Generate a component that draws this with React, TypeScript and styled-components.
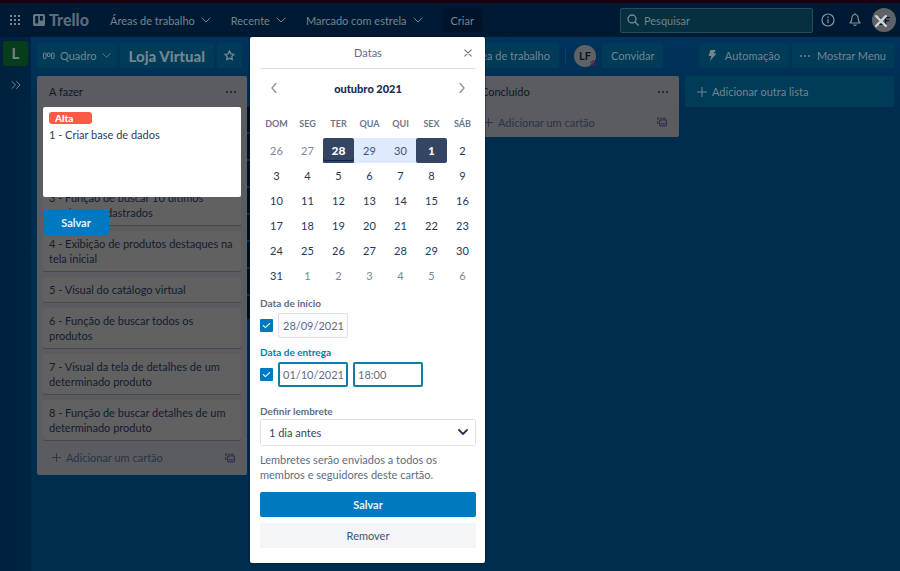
import React from "react";
import styled, { createGlobalStyle, css } from "styled-components";

const font = `Lato, "Open Sans", sans-serif`;

const Global = createGlobalStyle`
  *, *::before, *::after { box-sizing: border-box; }
  html, body, #root { height: 100%; }
  body { margin: 0; background: #002c4d; overflow: hidden; }
  body, button, input, select { font-family: ${font}; font-size: 11px; line-height: 15px; }
  button { border: 0; padding: 0; margin: 0; background: none; color: inherit; cursor: pointer; }
  svg { display: block; flex: none; }
  h1, h2, h3, p, ul, ol { margin: 0; padding: 0; font-size: 11px; font-weight: 400; }
  ul { list-style: none; }
`;

const Page = styled.div`
  position: relative;
  display: flex;
  flex-direction: column;
  min-height: 100%;
  color: #748590;
`;

const TopBar = styled.header`
  display: flex;
  align-items: center;
  height: 37px;
  padding: 0 4px 0 10px;
  background: #001a33;
  border-top: 3px solid #1c0014;
`;

const Logo = styled.a`
  display: flex;
  align-items: center;
  gap: 4px;
  margin-left: 12px;
  width: 77px;
  font: 900 16px/20px Lato, sans-serif;
  color: #5e6b78;
  text-decoration: none;
`;

const Nav = styled.nav`
  display: flex;
  align-items: center;
  gap: 20px;
  flex: 1;
`;

const NavButton = styled.button`
  display: flex;
  align-items: center;
  gap: 6px;
  white-space: nowrap;
`;

const CreateButton = styled.button`
  height: 24px;
  padding: 0 8px;
  border-radius: 2px;
  background: #00132a;
  color: #76858f;
`;

const Search = styled.label`
  display: flex;
  align-items: center;
  gap: 5px;
  width: 193px;
  height: 25px;
  padding: 0 6px;
  border: 1px solid #20505c;
  border-radius: 2px;
  background: #062f3f;
  input {
    flex: 1;
    min-width: 0;
    padding: 0;
    border: 0;
    outline: 0;
    background: none;
    color: #71858d;
  }
  input::placeholder { color: #71858d; opacity: 1; }
`;

const IconButton = styled.button<{ $size?: number }>`
  display: grid;
  place-items: center;
  width: ${(p) => p.$size ?? 16}px;
  height: ${(p) => p.$size ?? 16}px;
`;

const TopActions = styled.div`
  display: flex;
  align-items: center;
  gap: 7px;
  margin-left: 5px;
`;

const Avatar = styled.span<{ $size: number }>`
  position: relative;
  display: grid;
  place-items: center;
  flex: none;
  width: ${(p) => p.$size}px;
  height: ${(p) => p.$size}px;
  border-radius: 50%;
  background: #5f6266;
  color: #0b1426;
  font-size: 11px;
  font-weight: 700;
`;

const AvatarBadge = styled.span`
  position: absolute;
  right: 0;
  bottom: 1px;
`;

const CloseOverlay = styled.button`
  position: absolute;
  top: 7px;
  left: 3px;
  color: #cdd1d4;
`;

const Body = styled.div`
  display: flex;
  flex: 1;
`;

const Sidebar = styled.aside`
  display: flex;
  flex-direction: column;
  align-items: center;
  gap: 11px;
  width: 31px;
  padding-top: 4px;
  background: linear-gradient(90deg, #00213d, #002443);
`;

const Workspace = styled.a`
  display: grid;
  place-items: center;
  width: 25px;
  height: 25px;
  border-radius: 3px;
  background: #063d1b;
  color: #78828a;
  font-size: 15px;
  font-weight: 700;
  text-decoration: none;
`;

const Board = styled.main`
  flex: 1;
  min-width: 0;
  background: linear-gradient(#00345c 0, #002c4d 80px);
`;

const BoardBar = styled.div`
  display: flex;
  align-items: center;
  gap: 6px;
  height: 37px;
  padding: 0 6px;
`;

const BarLeft = styled.div`
  display: flex;
  gap: 3px;
  width: 522px;
`;

const BarRight = styled.div`
  display: flex;
  gap: 3px;
  margin-left: auto;
`;

const BarButton = styled.button<{ $pad?: number; $gap?: number; $push?: boolean }>`
  display: flex;
  align-items: center;
  justify-content: center;
  gap: ${(p) => p.$gap ?? 4}px;
  height: 25px;
  padding: 0 ${(p) => p.$pad ?? 9}px;
  border-radius: 2px;
  background: #003b58;
  white-space: nowrap;
  ${(p) => p.$push && css`margin-left: auto;`}
`;

const BoardTitle = styled.h1`
  font-size: 15px;
  line-height: 20px;
  font-weight: 900;
`;

const Divider = styled.span`
  width: 1px;
  height: 14px;
  margin-right: 2px;
  background: #11425f;
`;

const Lists = styled.div`
  display: flex;
  align-items: flex-start;
  gap: 6px;
  padding: 2px 6px;
`;

const List = styled.section`
  display: flex;
  flex-direction: column;
  width: 210px;
  padding: 0 6px;
  border-radius: 2px;
  background: #5b5c5f;
  color: #111c30;
`;

const ListHead = styled.div`
  display: flex;
  align-items: center;
  justify-content: space-between;
  height: 31px;
  padding: 0 2px 0 6px;
`;

const ListTitle = styled.h2`
  color: #0c1629;
`;

const Cards = styled.ul`
  display: flex;
  flex-direction: column;
  gap: 6px;
`;

const Card = styled.li`
  padding: 5px 6px;
  border-radius: 2px;
  background: #616161;
  box-shadow: 0 1px 0 #48494d;
`;

const EditedCard = styled.li`
  position: relative;
  height: 72px;
`;

const QuickEditor = styled.div`
  position: absolute;
  inset: 0 0 auto;
  z-index: 1;
  display: flex;
  flex-direction: column;
  align-items: flex-start;
  gap: 12px;
`;

const EditorBox = styled.div`
  width: 100%;
  height: 90px;
  padding: 5px 6px;
  border-radius: 2px;
  background: #fff;
  color: #2c3b57;
`;

const Label = styled.span`
  display: block;
  width: 43px;
  height: 12px;
  margin-bottom: 3px;
  padding-left: 6px;
  border-radius: 3px;
  background: #fb5a47;
  color: #fff;
  font-size: 10px;
  line-height: 12px;
  font-weight: 900;
`;

const QuickMenu = styled.div`
  position: absolute;
  top: 0;
  left: 204px;
  width: 9px;
  height: 212px;
  background: repeating-linear-gradient(#00101f 0 25px, #003358 25px 27px);
`;

const PrimaryButton = styled.button<{ $wide?: boolean }>`
  width: ${(p) => (p.$wide ? "100%" : "66px")};
  height: ${(p) => (p.$wide ? 25 : 26)}px;
  border-radius: 2px;
  background: #0079bf;
  color: #e4f5fc;
  font-weight: 700;
`;

const AddCard = styled.div`
  display: flex;
  align-items: center;
  justify-content: space-between;
  height: 35px;
  padding: 0 4px 0 9px;
  color: #28344a;
`;

const AddCardButton = styled.button`
  display: flex;
  align-items: center;
  gap: 5px;
`;

const SideLists = styled.div`
  display: contents;
  ${AddCard} { height: 30px; }
`;

const AddList = styled.button`
  display: flex;
  align-items: center;
  gap: 5px;
  flex: 1;
  height: 31px;
  padding: 0 12px;
  border-radius: 2px;
  background: #003b58;
`;

const Dialog = styled.section`
  position: absolute;
  top: 37px;
  left: 250px;
  z-index: 2;
  width: 235px;
  padding: 0 9px 15px 10px;
  border-radius: 2px;
  background: #fff;
  color: #5e6c84;
  box-shadow: 0 0 2px #001022;
`;

const DialogHead = styled.header`
  display: grid;
  grid-template-columns: 16px 1fr 16px;
  align-items: center;
  height: 32px;
  border-bottom: 1px solid #dfe1e6;
  text-align: center;
`;

const MonthBar = styled.div`
  display: flex;
  align-items: center;
  justify-content: space-between;
  height: 38px;
  padding: 0 6px;
  color: #8993a4;
`;

const MonthName = styled.h3`
  color: #172b4d;
  font-weight: 900;
`;

const Calendar = styled.table`
  width: 217px;
  margin: 5px 0 0 1px;
  border-collapse: collapse;
  table-layout: fixed;
  text-align: center;
`;

const WeekDay = styled.th`
  height: 26px;
  padding: 0 0 2px;
  color: #6b778c;
  font-size: 9px;
  line-height: 12px;
  font-weight: 700;
`;

type DayKind = "in" | "out" | "edge" | "today" | "range";

const Day = styled.td<{ $kind: DayKind }>`
  height: 25px;
  padding: 0;
  button {
    width: 100%;
    height: 25px;
    border-radius: 2px;
    color: #253858;
    ${(p) => p.$kind === "out" && css`color: #7a869a;`}
    ${(p) => p.$kind === "range" && css`background: #deebff; border-radius: 0; color: #42526e;`}
    ${(p) => (p.$kind === "edge" || p.$kind === "today") && css`background: #344563; color: #fff; font-weight: 900;`}
    ${(p) => p.$kind === "today" && css`box-shadow: inset 0 -2px 0 #344563, inset 0 -3px 0 #0c2350; font-size: 12px;`}
  }
`;

const Field = styled.div<{ $top: number }>`
  margin-top: ${(p) => p.$top}px;
`;

const FieldLabel = styled.label<{ $active?: boolean; $tight?: boolean }>`
  display: block;
  margin-bottom: ${(p) => (p.$tight ? 0 : 2)}px;
  font-size: 10px;
  line-height: 15px;
  font-weight: 700;
  color: ${(p) => (p.$active ? "#007fa5" : "#5e6c84")};
`;

const FieldRow = styled.div`
  display: flex;
  align-items: center;
  gap: 5px;
`;

const Check = styled.span`
  position: relative;
  width: 13px;
  height: 13px;
  color: #d8f4ff;
  input {
    appearance: none;
    display: block;
    width: 13px;
    height: 13px;
    margin: 0;
    border-radius: 1px;
    background: #0079bf;
  }
  svg {
    position: absolute;
    inset: 2px;
    pointer-events: none;
  }
`;

const DateInput = styled.input<{ $active?: boolean }>`
  width: 70px;
  height: 25px;
  padding: 0 0 0 ${(p) => (p.$active ? 3 : 4)}px;
  border: ${(p) => (p.$active ? "2px solid #0f7ea6" : "1px solid #dfe1e6")};
  border-radius: 2px;
  outline: 0;
  background: ${(p) => (p.$active ? "#fff" : "#fafbfc")};
  color: #5e6c84;
`;

const SelectBox = styled.div`
  position: relative;
  color: #253858;
  select {
    appearance: none;
    display: block;
    width: 100%;
    height: 27px;
    padding: 0 8px;
    border: 1px solid #dfe1e6;
    border-radius: 2px;
    background: #fff;
    color: #344563;
  }
  svg {
    position: absolute;
    top: 8px;
    right: 8px;
    pointer-events: none;
  }
`;

const Hint = styled.p`
  margin: 6px 0 10px;
`;

const RemoveButton = styled.button`
  width: 100%;
  height: 25px;
  margin-top: 6px;
  border-radius: 2px;
  background: #f4f5f7;
  color: #42526e;
`;

type StrokeProps = { d: string; size?: number; width?: number };
const Stroke = ({ d, size = 10, width = 1 }: StrokeProps) => (
  <svg width={size} height={size} viewBox="0 0 10 10" fill="none" stroke="currentColor" strokeWidth={width} strokeLinecap="round" strokeLinejoin="round">
    <path d={d} />
  </svg>
);

const down = "M1 3l4 4 4-4";
const plus = "M5 .5v9M.5 5h9";
const cross = "M1 1l8 8M9 1L1 9";

const Dots = () => (
  <svg width="10" height="4" viewBox="0 0 10 4" fill="currentColor">
    <circle cx="1" cy="2" r="1" /><circle cx="5" cy="2" r="1" /><circle cx="9" cy="2" r="1" />
  </svg>
);

const AppsIcon = () => (
  <svg width="11" height="11" viewBox="0 0 11 11" fill="#7b8790">
    {[0, 4, 8].map((y) => [0, 4, 8].map((x) => <rect key={`${x}-${y}`} x={x} y={y} width="2" height="2" />))}
  </svg>
);

const TrelloMark = () => (
  <svg width="12" height="12" viewBox="0 0 12 12">
    <path fillRule="evenodd" fill="#697782" d="M1.500 0h9A1.500 1.500 0 0 1 12 1.500v9a1.500 1.500 0 0 1-1.500 1.500h-9A1.500 1.500 0 0 1 0 10.500v-9A1.500 1.500 0 0 1 1.500 0zM2.200 2v7.500h3V2zM6.900 2v4.500h3V2z" />
  </svg>
);

const BoardIcon = () => (
  <svg width="12" height="8" viewBox="0 0 12 8" fill="none" stroke="currentColor">
    <rect x=".5" y="1" width="2.500" height="5.500" rx=".6" /><rect x="4.500" y="1" width="2.500" height="3.500" rx=".6" /><rect x="8.500" y="1" width="2.500" height="5.500" rx=".6" />
  </svg>
);

const StarIcon = () => (
  <svg width="11" height="11" viewBox="0 0 12 12" fill="none" stroke="currentColor" strokeWidth="1.500" strokeLinejoin="round">
    <path d="M6 1l1.500 3.200 3.500.5-2.500 2.400.6 3.500L6 8.900l-3.100 1.700.6-3.500L1 4.700l3.500-.5z" />
  </svg>
);

const SearchIcon = () => (
  <svg width="12" height="12" viewBox="0 0 12 12" fill="none" stroke="currentColor" strokeWidth="1.400" strokeLinecap="round">
    <circle cx="5" cy="5" r="4" /><path d="M8 8l3.300 3.300" />
  </svg>
);

const InfoIcon = () => (
  <svg width="14" height="14" viewBox="0 0 14 14" fill="none" stroke="#8593a0" strokeWidth="1.200">
    <circle cx="7" cy="7" r="6" /><path d="M7 6v4.200M7 3.600V5" />
  </svg>
);

const BellIcon = () => (
  <svg width="12" height="14" viewBox="0 0 12 14" fill="none" stroke="#8593a0" strokeWidth="1.200" strokeLinejoin="round">
    <path d="M6 1.500a3 3 0 0 0-3 3c0 3-.6 4.200-2 5.500h10C9.600 8.700 9 7.500 9 4.500a3 3 0 0 0-3-3zM4.700 11.500a1.400 1.400 0 0 0 2.600 0M6 .3v1.200" />
  </svg>
);

const BoltIcon = () => (
  <svg width="9" height="11" viewBox="0 0 9 11" fill="currentColor">
    <path d="M2.500 0h5L6 3.500h2.500L2 11l1.300-5H.5z" />
  </svg>
);

const TemplateIcon = () => (
  <svg width="10" height="10" viewBox="0 0 10 10" fill="none" stroke="currentColor" strokeWidth="1.200">
    <rect x="2.600" y="2.800" width="6.800" height="6" rx="1" /><path d="M.7 7V4.500M.7 3V1.200h1.500M3.200 1.200h1.800M6 1.200h2.300M4 6.700h4.500" />
  </svg>
);

const BadgeIcon = () => (
  <svg width="6" height="6" viewBox="0 0 6 6" fill="none" stroke="#4a2a48" strokeWidth="1.200">
    <path d="M.5 3L3 .8 5.500 3M.5 5.500L3 3.300l2.500 2.200" />
  </svg>
);

const AddCardRow = () => (
  <AddCard>
    <AddCardButton><Stroke d={plus} size={9} />Adicionar um cartão</AddCardButton>
    <IconButton $size={14} aria-label="Criar a partir de modelo"><TemplateIcon /></IconButton>
  </AddCard>
);

const cards = [
  "3 - Função de buscar 10 últimos produtos cadastrados",
  "4 - Exibição de produtos destaques na tela inicial",
  "5 - Visual do catálogo virtual",
  "6 - Função de buscar todos os produtos",
  "7 - Visual da tela de detalhes de um determinado produto",
  "8 - Função de buscar detalhes de um determinado produto",
];

const weekDays = ["DOM", "SEG", "TER", "QUA", "QUI", "SEX", "SÁB"];
const firstDay = Date.UTC(2021, 8, 26);
const weeks = [0, 1, 2, 3, 4, 5].map((w) =>
  [0, 1, 2, 3, 4, 5, 6].map((d) => {
    const i = w * 7 + d;
    const date = new Date(firstDay + i * 86400000);
    const kind: DayKind =
      i === 2 ? "today" : i === 5 ? "edge" : i === 3 || i === 4 ? "range" : date.getUTCMonth() === 9 ? "in" : "out";
    return { i, day: date.getUTCDate(), kind };
  })
);

const Tick = ({ id, label }: { id: string; label: string }) => (
  <Check>
    <input id={id} type="checkbox" defaultChecked aria-label={label} />
    <Stroke d="M1.500 5l2.300 2.300L8.500 2.800" size={9} width={1.3} />
  </Check>
);

const DatesDialog = () => (
  <Dialog role="dialog" aria-labelledby="dates-title">
    <DialogHead>
      <span />
      <h2 id="dates-title">Datas</h2>
      <IconButton aria-label="Fechar"><Stroke d={cross} size={8} width={1.3} /></IconButton>
    </DialogHead>
    <MonthBar>
      <IconButton aria-label="Mês anterior"><Stroke d="M7 .5L3 5l4 4.500" width={1.3} /></IconButton>
      <MonthName>outubro 2021</MonthName>
      <IconButton aria-label="Próximo mês"><Stroke d="M3 .5L7 5 3 9.500" width={1.3} /></IconButton>
    </MonthBar>
    <Calendar>
      <thead>
        <tr>{weekDays.map((d) => <WeekDay key={d} scope="col">{d}</WeekDay>)}</tr>
      </thead>
      <tbody>
        {weeks.map((week) => (
          <tr key={week[0].i}>
            {week.map((d) => <Day key={d.i} $kind={d.kind}><button>{d.day}</button></Day>)}
          </tr>
        ))}
      </tbody>
    </Calendar>
    <Field $top={8}>
      <FieldLabel htmlFor="start">Data de início</FieldLabel>
      <FieldRow>
        <Tick id="use-start" label="Usar data de início" />
        <DateInput id="start" defaultValue="28/09/2021" />
      </FieldRow>
    </Field>
    <Field $top={7}>
      <FieldLabel htmlFor="due" $active>Data de entrega</FieldLabel>
      <FieldRow>
        <Tick id="use-due" label="Usar data de entrega" />
        <DateInput id="due" $active defaultValue="01/10/2021" />
        <DateInput $active aria-label="Hora de entrega" defaultValue="18:00" />
      </FieldRow>
    </Field>
    <Field $top={17}>
      <FieldLabel htmlFor="reminder" $tight>Definir lembrete</FieldLabel>
      <SelectBox>
        <select id="reminder"><option>1 dia antes</option></select>
        <Stroke d={down} width={1.8} />
      </SelectBox>
    </Field>
    <Hint>Lembretes serão enviados a todos os membros e seguidores deste cartão.</Hint>
    <PrimaryButton $wide>Salvar</PrimaryButton>
    <RemoveButton>Remover</RemoveButton>
  </Dialog>
);

export default function App() {
  return (
    <Page>
      <Global />
      <TopBar>
        <IconButton $size={11} aria-label="Aplicativos"><AppsIcon /></IconButton>
        <Logo href="#"><TrelloMark />Trello</Logo>
        <Nav>
          {["Áreas de trabalho", "Recente", "Marcado com estrela"].map((item) => (
            <NavButton key={item}>{item}<Stroke d={down} /></NavButton>
          ))}
          <CreateButton>Criar</CreateButton>
        </Nav>
        <Search>
          <SearchIcon />
          <input type="search" placeholder="Pesquisar" aria-label="Pesquisar" />
        </Search>
        <TopActions>
          <IconButton $size={20} aria-label="Informações"><InfoIcon /></IconButton>
          <IconButton $size={20} aria-label="Notificações"><BellIcon /></IconButton>
          <Avatar $size={24}>
            LF
            <CloseOverlay aria-label="Fechar edição"><Stroke d={cross} size={12} width={2} /></CloseOverlay>
          </Avatar>
        </TopActions>
      </TopBar>
      <Body>
        <Sidebar>
          <Workspace href="#">L</Workspace>
          <IconButton aria-label="Expandir barra lateral"><Stroke d="M1 1.500L4.500 5 1 8.500M5.500 1.500L9 5 5.500 8.500" /></IconButton>
        </Sidebar>
        <Board>
          <BoardBar>
            <BarLeft>
              <BarButton $pad={6} $gap={5}><BoardIcon />Quadro<Stroke d={down} size={9} /></BarButton>
              <BarButton><BoardTitle>Loja Virtual</BoardTitle></BarButton>
              <BarButton $pad={7} aria-label="Favoritar"><StarIcon /></BarButton>
              <BarButton $push>Visível à Área de trabalho</BarButton>
            </BarLeft>
            <Divider />
            <Avatar $size={22}>LF<AvatarBadge><BadgeIcon /></AvatarBadge></Avatar>
            <BarButton>Convidar</BarButton>
            <BarRight>
              <BarButton $gap={8}><BoltIcon />Automação</BarButton>
              <BarButton $pad={8} $gap={7}><Dots />Mostrar Menu</BarButton>
            </BarRight>
          </BoardBar>
          <Lists>
            <List>
              <ListHead>
                <ListTitle>A fazer</ListTitle>
                <IconButton aria-label="Ações da lista"><Dots /></IconButton>
              </ListHead>
              <Cards>
                <EditedCard>
                  <QuickMenu />
                  <QuickEditor>
                    <EditorBox><Label>Alta</Label>1 - Criar base de dados</EditorBox>
                    <PrimaryButton>Salvar</PrimaryButton>
                  </QuickEditor>
                </EditedCard>
                {cards.map((text) => <Card key={text}>{text}</Card>)}
              </Cards>
              <AddCardRow />
            </List>
            <SideLists>
              <List>
                <ListHead />
                <AddCardRow />
              </List>
              <List>
                <ListHead>
                  <ListTitle>Concluído</ListTitle>
                  <IconButton aria-label="Ações da lista"><Dots /></IconButton>
                </ListHead>
                <AddCardRow />
              </List>
            </SideLists>
            <AddList><Stroke d={plus} />Adicionar outra lista</AddList>
          </Lists>
        </Board>
      </Body>
      <DatesDialog />
    </Page>
  );
}
